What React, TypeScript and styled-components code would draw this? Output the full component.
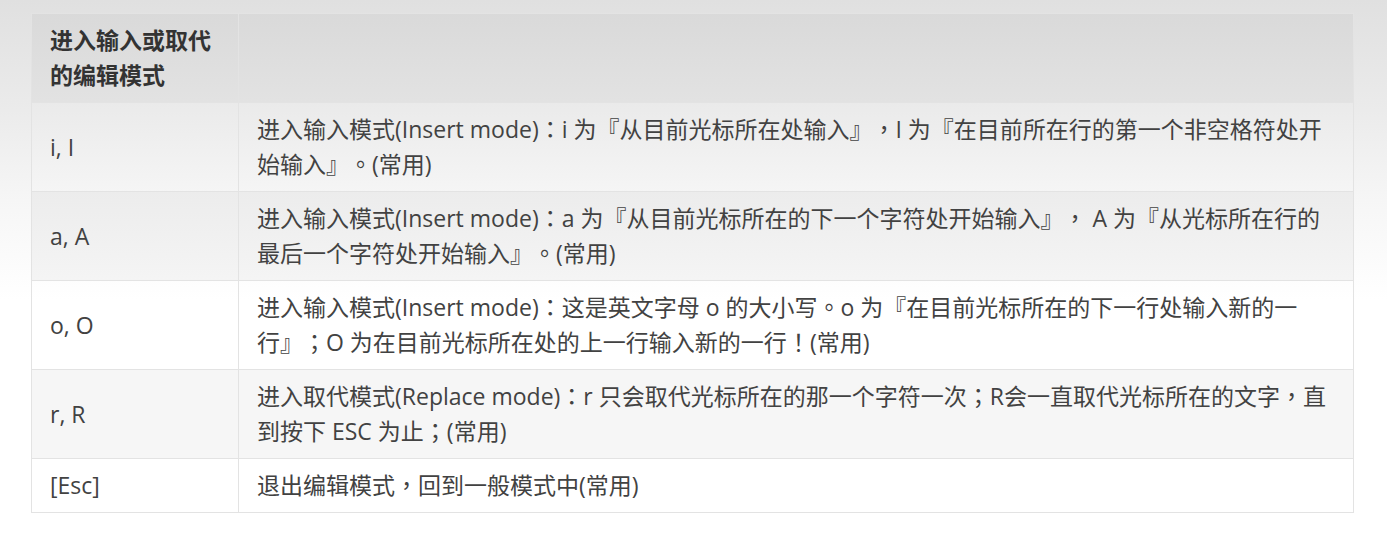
import React from "react";
import styled, { createGlobalStyle } from "styled-components";

const GlobalStyle = createGlobalStyle`
  html, body {
    margin: 0;
    padding: 0;
  }
  body {
    min-height: 535px;
    background: linear-gradient(to bottom, #e0e0e0 0px, #ebebeb 110px, #f6f6f6 200px, #ffffff 300px, #ffffff 100%);
    font-family: "Open Sans", "Noto Sans CJK SC", sans-serif;
  }
`;

const Page = styled.div`
  padding: 13px 33px 0 31px;
`;

const Table = styled.table`
  width: 1323px;
  border-collapse: collapse;
  table-layout: fixed;
  border: 1px solid #e3e3e3;
  font-size: 23px;
  line-height: 35px;
  color: #424242;
  text-spacing-trim: space-all;
`;

const HeadRow = styled.tr`
  background: rgba(0, 0, 0, 0.03);
`;

const Row = styled.tr<{ $alt?: boolean }>`
  background: ${(p) => (p.$alt ? "rgba(0, 0, 0, 0.035)" : "transparent")};
`;

const HeadCell = styled.th`
  text-align: left;
  font-weight: 700;
  color: #333333;
  padding: 9px 18px;
  border: 1px solid #e3e3e3;
  vertical-align: middle;
`;

const Cell = styled.td`
  padding: 9px 18px;
  border: 1px solid #e3e3e3;
  vertical-align: middle;
`;

const Punct = styled.span`
  font-family: "Open Sans", "Noto Sans CJK TC", sans-serif;
`;

const PUNCT = /([：，。；！『』])/;

function Text({ value }: { value: string }) {
  const parts = value.split(PUNCT);
  return (
    <>
      {parts.map((p, i) =>
        PUNCT.test(p) ? <Punct key={i}>{p}</Punct> : <React.Fragment key={i}>{p}</React.Fragment>
      )}
    </>
  );
}

const rows: { key: string; desc: string }[] = [
  {
    key: "i, I",
    desc: "进入输入模式(Insert mode)：i 为『从目前光标所在处输入』，I 为『在目前所在行的第一个非空格符处开始输入』。(常用)",
  },
  {
    key: "a, A",
    desc: "进入输入模式(Insert mode)：a 为『从目前光标所在的下一个字符处开始输入』， A 为『从光标所在行的最后一个字符处开始输入』。(常用)",
  },
  {
    key: "o, O",
    desc: "进入输入模式(Insert mode)：这是英文字母 o 的大小写。o 为『在目前光标所在的下一行处输入新的一行』；O 为在目前光标所在处的上一行输入新的一行！(常用)",
  },
  {
    key: "r, R",
    desc: "进入取代模式(Replace mode)：r 只会取代光标所在的那一个字符一次；R会一直取代光标所在的文字，直到按下 ESC 为止；(常用)",
  },
  {
    key: "[Esc]",
    desc: "退出编辑模式，回到一般模式中(常用)",
  },
];

export default function App() {
  return (
    <>
      <GlobalStyle />
      <Page>
        <Table>
          <colgroup>
            <col style={{ width: 207 }} />
            <col />
          </colgroup>
          <thead>
            <HeadRow>
              <HeadCell>进入输入或取代的编辑模式</HeadCell>
              <HeadCell></HeadCell>
            </HeadRow>
          </thead>
          <tbody>
            {rows.map((r, i) => (
              <Row key={r.key} $alt={i % 2 === 1}>
                <Cell>{r.key}</Cell>
                <Cell>
                  <Text value={r.desc} />
                </Cell>
              </Row>
            ))}
          </tbody>
        </Table>
      </Page>
    </>
  );
}
